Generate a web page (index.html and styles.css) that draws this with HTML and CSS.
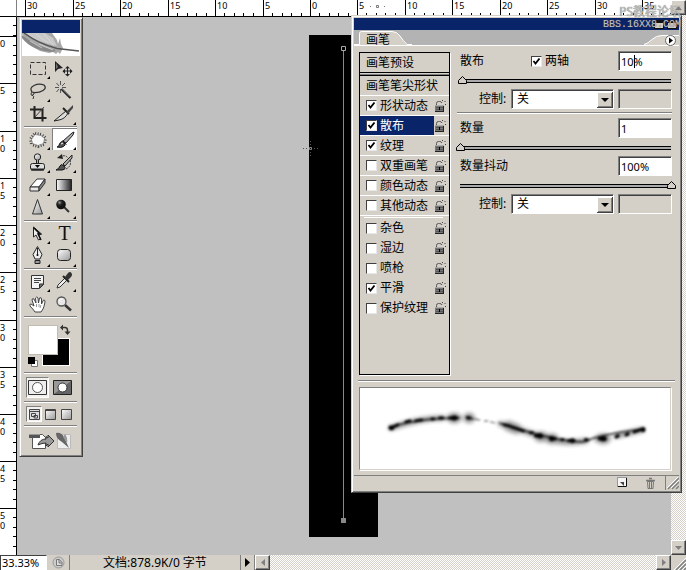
FILE: index.html
```html
<!DOCTYPE html>
<html lang="zh-CN">
<head>
    <meta charset="UTF-8">
    <meta name="viewport" content="width=device-width, initial-scale=1.0">
    <title>画笔</title>
    <link rel="stylesheet" href="styles.css">
</head>
<body>
    <svg width="0" height="0" class="defs">
        <defs>
            <linearGradient id="metal" x1="0" y1="0" x2="1" y2="1">
                <stop offset="0" stop-color="#fff"/>
                <stop offset="1" stop-color="#999"/>
            </linearGradient>
            <linearGradient id="fade">
                <stop offset="0" stop-color="#fff"/>
                <stop offset="1" stop-color="#222"/>
            </linearGradient>
            <radialGradient id="ball" cx="0.35" cy="0.3">
                <stop offset="0" stop-color="#999"/>
                <stop offset="0.5" stop-color="#222"/>
                <stop offset="1" stop-color="#111"/>
            </radialGradient>
            <symbol id="lock" viewBox="0 0 13 14">
                <path d="M2.500 7V4.500q0-2 2-2h1q2 0 2.500 1.500" fill="none" stroke="#555"/>
                <path d="M1 6h9v7H1z" fill="#777"/>
                <path d="M1 6h9v1H1z" fill="#aaa"/>
                <path d="M9 7h1v6H1v-1h8z" fill="#222"/>
                <path d="M2 8.500h7M2 10.500h7" stroke="#555"/>
                <path d="M5 8h1v3H5z"/>
                <path d="M8.500 1v1M10.500 2.500h1M11 5.500h1" stroke="#444"/>
            </symbol>
        </defs>
    </svg>

    <div class="app">
        <div class="ruler-corner"></div>
        <ol class="ruler-top">
            <li>30</li><li>25</li><li>20</li><li>15</li><li>10</li><li>5</li><li>0</li>
            <li>5</li><li>10</li><li>15</li><li>20</li><li>25</li><li>30</li><li>35</li>
        </ol>
        <ol class="ruler-left">
            <li></li><li>0</li><li>5</li><li>10</li><li>15</li><li>20</li><li>25</li>
            <li>30</li><li>35</li><li>40</li><li>45</li><li>50</li>
        </ol>

        <!-- Document -->
        <main class="canvas">
            <div class="document">
                <svg class="work-path" width="7" height="478" viewBox="0 0 7 478">
                    <path d="M3.500 5v468" stroke="#888"/>
                    <path d="M1.500 1.500h4v4h-4z" fill="#000" stroke="#aaa"/>
                    <path d="M1 473h5v5H1z" fill="#888"/>
                </svg>
                <svg class="cursor" width="15" height="15" viewBox="0 0 15 15">
                    <path d="M6.500 6.500h2v2h-2z" fill="none" stroke="#888"/>
                    <path d="M0 7.500h1M3 7.500h1M11 7.500h1M14 7.500h1M7.500 0v1M7.500 3v1M7.500 11v1M7.500 14v1" stroke="#555"/>
                </svg>
            </div>
        </main>

        <div class="scroll-v">
            <button class="scroll-btn" aria-label="向上"><svg width="7" height="4"><path d="M0 4 3.500 0 7 4z" fill="#808080"/></svg></button>
            <button class="scroll-btn" aria-label="向下"><svg width="7" height="4"><path d="M0 0 3.500 4 7 0z" fill="#808080"/></svg></button>
        </div>

        <!-- Status bar -->
        <footer class="status">
            <input class="zoom-level" type="text" value="33.33%" aria-label="缩放">
            <button class="status-icon" aria-label="版本">
                <svg width="13" height="13" viewBox="0 0 13 13"><circle cx="6.500" cy="6.500" r="5.500" fill="#ccc" stroke="#999"/><path d="M4.500 3.500h3l2.500 3v3H4.500zM7 4v3h3" fill="#ddd" stroke="#777"/></svg>
            </button>
            <span class="status-text">文档:878.9K/0 字节</span>
            <button class="status-more" aria-label="更多"><svg width="5" height="9"><path d="M0 0 5 4.500 0 9z"/></svg></button>
            <div class="scroll-h">
                <button class="scroll-btn" aria-label="向左"><svg width="4" height="7"><path d="M4 0 0 3.500 4 7z" fill="#808080"/></svg></button>
                <button class="scroll-btn" aria-label="向右"><svg width="4" height="7"><path d="M0 0 4 3.500 0 7z" fill="#808080"/></svg></button>
            </div>
            <svg class="size-grip" width="15" height="15"><path d="M5 15 15 5M9 15l6-6M13 15l2-2" stroke="#808080" stroke-width="1.500"/><path d="M3 15 15 3M7 15l8-8M11 15l4-4" stroke="#fff"/></svg>
        </footer>

        <svg class="ruler-cursor" width="15" height="5" viewBox="0 0 15 5">
            <path d="M6.500 1.500h2v2h-2z" fill="none" stroke="#777"/>
            <path d="M0 2.500h1M14 2.500h1" stroke="#777"/>
        </svg>

        <!-- Toolbox -->
        <aside class="toolbox">
            <div class="title-bar"></div>
            <svg class="feather" width="58" height="23" viewBox="0 0 58 23">
                <path d="M0 0h30l5 7 1 4 2-6 1 6 2 4-1 2-2 4-2-2-2 2-3-2-4 1-9-2Q8 13 0 1z" fill="#a8a8a8"/>
                <path d="M3 0h20l8 5 4 8Q15 9 3 0z" fill="#c8c8c8"/>
                <path d="M0 2Q14 14 34 17l-3 2Q10 18 0 5z" fill="#888"/>
                <path d="M6 1l12 8M14 1l12 9M22 1l10 12M8 8l12 7M17 11l14 6" stroke="#ddd" stroke-width="0.700"/>
                <path d="M2 0Q17 11 35 15.500L57 18" fill="none" stroke="#555" stroke-width="1.500"/>
            </svg>
            <div class="tools">
                <button class="tool more" aria-label="矩形选框"><svg viewBox="0 0 25 23"><path d="M4.500 5.500h15v12h-15z" fill="none" stroke="#333" stroke-dasharray="4 2"/></svg></button>
                <button class="tool" aria-label="移动"><svg viewBox="0 0 25 23"><path d="M3 4v11l3-3 5-1z" fill="#222"/><path d="M4 6v6l2-2z" fill="#777"/><path d="M15.500 10v8M11.500 14h8" stroke="#222"/><path d="m15.500 9 2.500 2.500h-5zM15.500 19.500l-2.500-2.500h5zM10.500 14.200l2.500-2.500v5zM20.500 14.200 18 11.700v5z" fill="#222"/></svg></button>
                <button class="tool more" aria-label="套索"><svg viewBox="0 0 25 23"><path d="M6 12Q3 8 8 5.500T18 5q3 3-1 5.500T7 12.500" fill="none" stroke="#333" stroke-width="1.300"/><path d="M7 12q-2 0-2 2t2 1 0-3M6 15q3 1 1 4" fill="none" stroke="#333"/></svg></button>
                <button class="tool" aria-label="魔棒"><svg viewBox="0 0 25 23"><path d="M8.500 1v4M8.500 9v4M3 7.500h4M10 7.500h4M4.500 3l2.500 3M13 3l-3 3M4.500 12 7 9" stroke="#555"/><path d="m9.500 9 9 9" stroke="#222" stroke-width="2.200"/><path d="m10 8.500 8 8" stroke="#999"/></svg></button>
                <button class="tool" aria-label="裁切"><svg viewBox="0 0 25 23"><path d="M8.500 3v12h12M4 6.500h12.500v12" fill="none" stroke="#222" stroke-width="2"/><path d="m9 14 9-10" stroke="#444"/></svg></button>
                <button class="tool more" aria-label="切片"><svg viewBox="0 0 25 23"><path d="m2 18 12-10 2 2q-3 6-9 7z" fill="#ddd" stroke="#222"/><path d="m11 5 6 6" stroke="#222" stroke-width="2"/><path d="m14 9 7-7v3l-5 6z" fill="#444"/></svg></button>
            </div>
            <div class="rule"></div>
            <div class="tools">
                <button class="tool more" aria-label="修补"><svg viewBox="0 0 25 23"><path d="m9 6 6 1 4 3-1 6-6 2-6-2-1-5z" fill="none" stroke="#444" stroke-width="4" stroke-dasharray="1 1.500"/><path d="m9 6.500 6 1 3.500 3-1 5-5.500 2-5.500-2-1-4z" fill="#f8f8f8" stroke="#777" stroke-width="0.700"/></svg></button>
                <button class="tool more active" aria-label="画笔"><svg viewBox="0 0 25 23"><path d="m11 13 9-8 2-1-1 3-7 8z" fill="#aaa" stroke="#222"/><path d="m10.500 12.500 4 4" stroke="#222"/><path d="M5 19q2 0 2.500-3 2-4 4.500-1.500t-.5 4Q9 20 5 19z" fill="#555" stroke="#111"/><path d="M9 16l2-1" stroke="#fff"/></svg></button>
                <button class="tool more" aria-label="图章"><svg viewBox="0 0 25 23"><circle cx="11.500" cy="6" r="3.200" fill="url(#metal)" stroke="#222"/><path d="M10.500 9v4h2V9" fill="#aaa" stroke="#222"/><rect x="4.500" y="12.500" width="14" height="6.500" rx="2" fill="#ddd" stroke="#222"/><path d="M5 18.500h13" stroke="#222" stroke-width="2"/><path d="M9 14h5l-2.500 3z"/></svg></button>
                <button class="tool more" aria-label="历史记录画笔"><svg viewBox="0 0 25 23"><path d="m11 13 9-9v3l-7 8z" fill="#aaa" stroke="#222"/><path d="M4 19q3-1 4-4t4 0-2 4z" fill="#555" stroke="#111"/><path d="M8 6q5-3 8 1M18 9q2 6-4 9" fill="none" stroke="#333" stroke-dasharray="2 1"/><path d="m5 7 5-4 1 5z" fill="#222"/></svg></button>
                <button class="tool more" aria-label="橡皮擦"><svg viewBox="0 0 25 23"><path d="m4 13 7-8h8l-6 8z" fill="#fff" stroke="#333"/><path d="M4 13h9v4H4z" fill="#e8e8e8" stroke="#333"/><path d="m13 13 6-8v4l-6 8z" fill="#888" stroke="#333"/></svg></button>
                <button class="tool more" aria-label="渐变"><svg viewBox="0 0 25 23"><path d="M4.500 5.500h15v11h-15z" fill="url(#fade)" stroke="#222"/></svg></button>
                <button class="tool more" aria-label="锐化"><svg viewBox="0 0 25 23"><path d="m11.500 2.500 5 14.500h-10z" fill="url(#metal)" stroke="#333"/></svg></button>
                <button class="tool more" aria-label="加深"><svg viewBox="0 0 25 23"><path d="m12 10 5 5" stroke="#333" stroke-width="2"/><circle cx="9" cy="7.500" r="4.800" fill="url(#ball)"/></svg></button>
            </div>
            <div class="rule"></div>
            <div class="tools">
                <button class="tool more" aria-label="路径选择"><svg viewBox="0 0 25 23"><path d="M7.500 5v10l2.500-2 2.500 5 2-1-2-5h3z" fill="#eee" stroke="#222"/><path d="m8 6 6 6h-2l3 6" fill="none" stroke="#111" stroke-width="1.500"/></svg></button>
                <button class="tool more type" aria-label="文字">T</button>
                <button class="tool more" aria-label="钢笔"><svg viewBox="0 0 25 23"><path d="m11.500 1.500 4.500 8-2 4.500H9L7 9.500z" fill="#eee" stroke="#222"/><path d="M11.500 3v6" stroke="#222"/><circle cx="11.500" cy="10" r="1"/><path d="M9 15.500h5v3H9z" fill="#999" stroke="#222"/></svg></button>
                <button class="tool more" aria-label="形状"><svg viewBox="0 0 25 23"><rect x="5.500" y="4.500" width="13" height="11" rx="3" fill="url(#metal)" stroke="#222"/></svg></button>
            </div>
            <div class="rule"></div>
            <div class="tools">
                <button class="tool more" aria-label="注释"><svg viewBox="0 0 25 23"><path d="M5.500 5.500h12v9l-4 4h-8z" fill="#f4f4f4" stroke="#333"/><path d="M13.500 18v-4h4z" fill="#777" stroke="#333"/><path d="M8 8.500h7M8 10.500h7M8 12.500h5" stroke="#444"/></svg></button>
                <button class="tool more" aria-label="吸管"><svg viewBox="0 0 25 23"><path d="m5 18 1-3 8-8 2 2-8 8z" fill="#eee" stroke="#333"/><path d="m11 6 6 6" stroke="#222" stroke-width="2"/><path d="m13 7 3-4q2-2 3.500 0T19 7l-3 3z" fill="#333"/></svg></button>
                <button class="tool" aria-label="抓手"><svg viewBox="0 0 25 23"><path d="M9 19q-2-3-5-6-1-2 1-2l3 2-2-6q0-2 2-1l2 4-.5-5q1-2 2.500 0l.5 5 1-5q2-1 2 1v5l2-4q2 0 1.500 2-1 5-2 7l-2 3z" fill="#fff" stroke="#444"/><path d="M10.500 11v3M13 11v3M15 12l-1 3" stroke="#999"/></svg></button>
                <button class="tool" aria-label="缩放"><svg viewBox="0 0 25 23"><path d="m13 12 6 5.500" stroke="#333" stroke-width="2.500"/><circle cx="9.500" cy="8.500" r="4.500" fill="#e8e8e8" stroke="#555" stroke-width="1.300"/><path d="M7 8q1-2 3-2" fill="none" stroke="#fff"/></svg></button>
            </div>
            <div class="rule"></div>
            <div class="swatches">
                <button class="swatch background" aria-label="背景色"></button>
                <button class="swatch foreground" aria-label="前景色"></button>
                <button class="swap" aria-label="切换颜色"><svg width="11" height="11" viewBox="0 0 11 11"><path d="M3 3.500h2q2.500 0 2.500 3V8" fill="none" stroke="#333" stroke-width="1.500"/><path d="M0 3.500 3 .5v6zM4.500 7.500h6l-3 3.500z" fill="#333"/></svg></button>
                <button class="reset" aria-label="默认颜色"><svg width="10" height="10" viewBox="0 0 10 10"><path d="M3.500 3.500h6v6h-6z" fill="#fff" stroke="#777"/><path d="M0 0h7v7H0z"/></svg></button>
            </div>
            <div class="rule"></div>
            <div class="modes">
                <button class="mode pressed" aria-label="标准模式"><svg width="19" height="15" viewBox="0 0 19 15"><path d="M.5.5h18v14H.5z" fill="#eee" stroke="#333"/><circle cx="9.500" cy="7.500" r="5" fill="#fff" stroke="#555"/></svg></button>
                <button class="mode" aria-label="快速蒙版"><svg width="19" height="15" viewBox="0 0 19 15"><path d="M.5.5h18v14H.5z" fill="#666" stroke="#222"/><path d="M1 1h17L1 14z" fill="#999"/><circle cx="9.500" cy="7.500" r="4.500" fill="#fff" stroke="#333"/></svg></button>
            </div>
            <div class="rule"></div>
            <div class="modes screens">
                <button class="mode pressed" aria-label="标准屏幕"><svg width="11" height="11" viewBox="0 0 11 11"><path d="M.5.5h10v10H.5z" fill="#ddd" stroke="#444"/><path d="M1 2.500h9M2.500 4.500h4v3h-4zM5 6.500h3.500v2.500H5z" fill="none" stroke="#444"/></svg></button>
                <button class="mode" aria-label="带菜单栏的全屏"><svg width="11" height="11" viewBox="0 0 11 11"><path d="M.5.5h10v10H.5z" fill="url(#metal)" stroke="#444"/><path d="M1 1.500h9" stroke="#444"/></svg></button>
                <button class="mode" aria-label="全屏"><svg width="11" height="11" viewBox="0 0 11 11"><path d="M.5.5h10v10H.5z" fill="url(#metal)" stroke="#444"/></svg></button>
            </div>
            <div class="rule"></div>
            <button class="jump" aria-label="转到 ImageReady">
                <svg width="43" height="18" viewBox="0 0 43 18">
                    <path d="M3.500 2.500h10l3 3v11h-13z" fill="#fff" stroke="#555"/>
                    <path d="M0 2h11v4H0z" fill="#555"/><path d="M0 2h11v1H0z" fill="#999"/>
                    <path d="M9 13q2-6 8-6V4.500l2 1.500V3l6 6-6 6v-3l-2 2v-3q-4 0-8 2z" fill="#999" stroke="#333"/>
                    <path d="M28.500 2.500h13v14h-13z" fill="#eee" stroke="#bbb"/>
                    <path d="M27 1q5-1 8 4l5 11-7-6q-6-3-6-9z" fill="#666"/><path d="M36 2q3 4 2 9l-4-6z" fill="#999"/>
                </svg>
            </button>
        </aside>

        <!-- Brush palette -->
        <section class="palette">
            <div class="title-bar"><span class="win-btn"></span><span class="win-btn close"></span></div>
            <div class="tab-strip">
                <div class="tab">
                    <svg width="58" height="15" viewBox="0 0 58 15"><path d="M0 15.500V14h5.500V3.500q0-2 2-2H38q5 0 8 4.500t6 8H58V16H0z" fill="#d4d0c8"/><path d="M0 14.500h5.500V3.500q0-2 2-2H38q5 0 8 4.500t7 8.500h5" fill="none" stroke="#fff"/></svg>
                    <span>画笔</span>
                </div>
                <div class="tab-menu">
                    <svg width="35" height="15" viewBox="0 0 35 15"><path d="M0 14.500q4-1 8-5t10-4h17V15H0z" fill="#d4d0c8"/><path d="M0 14.500q4-1 8-5t10-4h17" fill="none" stroke="#fff"/></svg>
                    <button aria-label="面板菜单"><svg width="11" height="11" viewBox="0 0 11 11"><circle cx="5.500" cy="5.500" r="5" fill="#fff" stroke="#666"/><path d="m4 2.500 4 3-4 3z"/></svg></button>
                </div>
            </div>

            <div class="palette-body">
                <div class="options">
                    <div class="presets">画笔预设</div>
                    <div class="tip-shape">画笔笔尖形状</div>
                    <div class="option"><label><input type="checkbox" checked>形状动态</label><svg><use href="#lock"/></svg></div>
                    <div class="option selected"><label><input type="checkbox" checked>散布</label><svg><use href="#lock"/></svg></div>
                    <div class="option"><label><input type="checkbox" checked>纹理</label><svg><use href="#lock"/></svg></div>
                    <div class="option"><label><input type="checkbox">双重画笔</label><svg><use href="#lock"/></svg></div>
                    <div class="option"><label><input type="checkbox">颜色动态</label><svg><use href="#lock"/></svg></div>
                    <div class="option"><label><input type="checkbox">其他动态</label><svg><use href="#lock"/></svg></div>
                    <div class="options-rule"></div>
                    <div class="option plain"><label><input type="checkbox">杂色</label><svg><use href="#lock"/></svg></div>
                    <div class="option plain"><label><input type="checkbox">湿边</label><svg><use href="#lock"/></svg></div>
                    <div class="option plain"><label><input type="checkbox">喷枪</label><svg><use href="#lock"/></svg></div>
                    <div class="option plain"><label><input type="checkbox" checked>平滑</label><svg><use href="#lock"/></svg></div>
                    <div class="option plain"><label><input type="checkbox">保护纹理</label><svg><use href="#lock"/></svg></div>
                </div>

                <div class="settings">
                    <div class="param">
                        <label for="scatter">散布</label>
                        <label class="both-axes"><input type="checkbox" checked>两轴</label>
                        <span class="field"><input type="text" id="scatter" value="10%"><i class="caret"></i></span>
                    </div>
                    <input class="slider" type="range" min="0" max="100" value="1" aria-label="散布">
                    <div class="control">
                        <label for="scatter-control">控制:</label>
                        <select id="scatter-control"><option>关</option></select>
                        <input class="off" type="text" disabled aria-label="渐隐步数">
                    </div>
                    <div class="settings-rule"></div>
                    <div class="param">
                        <label for="count">数量</label>
                        <span class="field"><input type="text" id="count" value="1"></span>
                    </div>
                    <input class="slider" type="range" min="0" max="100" value="0" aria-label="数量">
                    <div class="param">
                        <label for="jitter">数量抖动</label>
                        <span class="field"><input type="text" id="jitter" value="100%"></span>
                    </div>
                    <input class="slider" type="range" min="0" max="100" value="100" aria-label="数量抖动">
                    <div class="control">
                        <label for="jitter-control">控制:</label>
                        <select id="jitter-control"><option>关</option></select>
                        <input class="off" type="text" disabled aria-label="渐隐步数">
                    </div>
                </div>
            </div>

            <div class="preview">
                <svg viewBox="0 0 311 81">
                    <defs>
                        <filter id="soft" x="-10%" y="-50%" width="120%" height="200%"><feGaussianBlur stdDeviation="1.200"/></filter>
                        <filter id="softer" x="-10%" y="-50%" width="120%" height="200%"><feGaussianBlur stdDeviation="2"/></filter>
                    </defs>
                    <g filter="url(#softer)" fill="none" stroke="#000" stroke-linecap="round" opacity="0.450">
                        <path d="M31 40Q61 30 83 30M89 30h11M107 30h5M141 36Q165 43 185 50T227 53M237 51l12-1M257 48l26-6" stroke-width="5"/>
                        <path d="M93 30h3M109 30h1M149 38l8 3M180 49h3M191 51h3M242 51h4" stroke-width="10"/>
                    </g>
                    <g filter="url(#soft)" fill="none" stroke="#000" stroke-linecap="round">
                        <path d="M31 40l7-3M46 34l4-1M56 33l6-1M72 31l2 0M80 30l3 0M90 30h7M108 30h2M145 37l5 1M152 39l12 4M171 45l2 0M176 48l6 1M191 50l5 1M202 52h2M209 53h6M226 52h2M240 51h6M257 49l2-1M267 47l2-1M275 44l9-3" stroke-width="3"/>
                        <path d="M38 37Q64 30 99 30M107 29l6 2M142 36q38 12 60 16t28 0 54-11" stroke-width="2" opacity="0.650"/>
                        <path d="M115 31l5 1M125 33l3 0M131 34l4 1M139 35l4 1" stroke-width="1.500" opacity="0.500"/>
                        <path d="M31 40l1 0M94 30h1M180 48h1M192 51h1M213 53h0M243 51h2M284 42h0" stroke-width="5"/>
                    </g>
                </svg>
            </div>

            <div class="palette-footer">
                <button aria-label="新建画笔"><svg width="11" height="11" viewBox="0 0 11 11"><path d="M1 1h9v9H1z" fill="#f4f4f4"/><path d="M.5 10V.5H10" fill="none" stroke="#999"/><path d="M9.500 1v8.500H1" fill="none" stroke="#111"/><path d="M3 5h4v4z" fill="#444"/></svg></button>
                <button aria-label="删除画笔"><svg width="11" height="12" viewBox="0 0 11 12"><path d="M1 3.500h9M4 1.500h3" stroke="#777" stroke-width="1.500"/><path d="M2.500 4.500h6l-.5 7H3zM4.500 5v6M6.500 5v6" fill="none" stroke="#777"/></svg></button>
                <svg class="grip" width="14" height="15"><path d="M2 14 13 3M6 14l7-7M10 14l3-3" stroke="#808080" stroke-width="1.500"/><path d="M1 13 12 2M5 13l8-8" stroke="#fff"/></svg>
            </div>
        </section>

        <div class="watermark">
            <span>PS教程论坛</span>
            <span class="site">BBS.16XX8.COM</span>
        </div>
    </div>
</body>
</html>
```
FILE: styles.css
```css
* {
    box-sizing: border-box;
}

body {
    margin: 0;
    height: 100vh;
    overflow: hidden;
    background: #d4d0c8;
    color: #000;
    font-family: "Noto Sans", "Noto Sans CJK SC", sans-serif;
    font-size: 12px;
    line-height: 16px;
}

button,
input,
select {
    margin: 0;
    padding: 0;
    border: 0;
    border-radius: 0;
    background: none;
    color: inherit;
    font: inherit;
    outline: none;
}

svg {
    display: block;
}

.defs {
    position: absolute;
}

.app {
    position: relative;
    display: grid;
    grid-template-columns: 17px 1fr 15px;
    grid-template-rows: 17px 1fr 15px;
    height: 100%;
}

/* Rulers */
.ruler-corner {
    background: #fff;
    border-right: 1px solid #808080;
    border-bottom: 1px solid #000;
    background-image: radial-gradient(#000 40%, transparent 50%), radial-gradient(#000 40%, transparent 50%);
    background-size: 2px 2px;
    background-repeat: repeat-x, repeat-y;
    background-position: 0 12px, 12px 0;
}

.ruler-top,
.ruler-left {
    display: grid;
    margin: 0;
    list-style: none;
    background: #fff;
    overflow: hidden;
    font-size: 9px;
    line-height: 10px;
}

.ruler-top {
    grid-template-columns: 48px 47px 48px 47px 48px 47px 47px 48px 47px 48px 47px 48px 47px 48px;
    padding: 0 0 0 8px;
    border-bottom: 1px solid #000;
}

.ruler-top li {
    padding: 1px 0 0 1px;
    border-left: 1px solid #000;
    background-image: linear-gradient(#000, #000), linear-gradient(#000, #000), linear-gradient(#000, #000), linear-gradient(#000, #000);
    background-size: 1px 3px;
    background-position: 8px 100%, 18px 100%, 27px 100%, 37px 100%;
    background-repeat: no-repeat;
}

.ruler-left {
    grid-template-rows: 19px 47px 48px 47px 47px 47px 48px 47px 47px 47px 47px 47px;
    padding: 0;
    border-right: 1px solid #000;
}

.ruler-left li {
    padding: 2px 10px 0 0;
    border-top: 1px solid #000;
    word-break: break-all;
    background-image: linear-gradient(#000, #000), linear-gradient(#000, #000), linear-gradient(#000, #000), linear-gradient(#000, #000);
    background-size: 3px 1px;
    background-position: 100% 8px, 100% 18px, 100% 27px, 100% 37px;
    background-repeat: no-repeat;
}

.ruler-left li:first-child {
    border-top: 0;
}

.ruler-cursor {
    position: absolute;
    left: 370px;
    top: 4px;
}

/* Document area */
.canvas {
    display: flex;
    justify-content: center;
    align-items: center;
    padding-right: 2px;
    background: #c0c0c0;
    min-height: 0;
}

.document {
    position: relative;
    width: 69px;
    height: 502px;
    background: #000;
}

.work-path {
    position: absolute;
    left: 31px;
    top: 10px;
}

.cursor {
    position: absolute;
    left: -6px;
    top: 106px;
}

/* Scrollbars */
.scroll-v,
.scroll-h {
    display: flex;
    justify-content: space-between;
    background: repeating-conic-gradient(#d4d0c8 0 25%, #fff 0 50%) 0 0 / 2px 2px;
}

.scroll-v {
    grid-column: 3;
    grid-row: 1 / 3;
    flex-direction: column;
}

.scroll-h {
    flex: 1;
}

.scroll-btn {
    display: flex;
    justify-content: center;
    align-items: center;
    width: 15px;
    height: 15px;
    background: #d4d0c8;
    border: 1px solid;
    border-color: #fff #404040 #404040 #fff;
    box-shadow: inset -1px -1px #808080;
}

/* Status bar */
.status {
    grid-column: 1 / 4;
    display: flex;
    align-items: stretch;
    background: #d4d0c8;
}

.zoom-level {
    width: 47px;
    padding-left: 1px;
    background: #fff;
    border: solid #404040;
    border-width: 1px 0 0 1px;
    border-right: 1px solid #fff;
    font-size: 11px;
}

.status-icon {
    display: flex;
    justify-content: center;
    align-items: center;
    width: 23px;
    border-right: 1px solid #808080;
}

.status-text {
    width: 170px;
    text-align: center;
}

.status-more {
    display: flex;
    justify-content: center;
    align-items: center;
    width: 15px;
    border: solid #808080;
    border-width: 0 1px;
}

.size-grip {
    background: #d4d0c8;
}

/* Toolbox */
.toolbox {
    position: absolute;
    left: 19px;
    top: 17px;
    width: 64px;
    padding: 2px 1px 1px 2px;
    background: #d4d0c8;
    border: 1px solid;
    border-color: #d4d0c8 #404040 #404040 #d4d0c8;
    box-shadow: inset 1px 1px #fff, inset -1px -1px #808080;
}

.title-bar {
    height: 13px;
    background: #0a246a;
}

.toolbox .title-bar {
    margin-right: 1px;
}

.feather {
    background: #fff;
}

.tools {
    display: grid;
    grid-template-columns: 26px 26px;
    grid-auto-rows: 23px;
    padding-left: 4px;
}

.feather + .tools {
    margin-top: 1px;
}

.tool {
    position: relative;
    width: 25px;
    height: 22px;
}

.tool svg {
    width: 25px;
    height: 23px;
}

.tool.more::after {
    content: "";
    position: absolute;
    right: 1px;
    bottom: 0;
    border-left: 3px solid transparent;
    border-bottom: 3px solid #000;
}

.tool.active {
    background: #fff;
    box-shadow: inset 1px 1px #808080;
}

.tool.type {
    font: 20px/22px "Liberation Serif", serif;
    color: #111;
}

.rule {
    height: 2px;
    margin: 0 4px 0 2px;
    border-top: 1px solid #808080;
    border-bottom: 1px solid #fff;
}

.swatches {
    position: relative;
    height: 54px;
}

.swatch {
    position: absolute;
    width: 28px;
    height: 28px;
    border: 1px solid #fff;
}

.foreground {
    left: 7px;
    top: 8px;
    background: #fff;
    box-shadow: 0 0 0 1px #c0bcb4;
}

.background {
    left: 20px;
    top: 20px;
    background: #000;
}

.swap {
    position: absolute;
    left: 38px;
    top: 6px;
}

.reset {
    position: absolute;
    left: 6px;
    top: 39px;
}

.modes {
    display: flex;
    align-items: center;
    gap: 2px;
    height: 27px;
    padding-left: 4px;
}

.mode {
    display: flex;
    justify-content: center;
    align-items: center;
    width: 23px;
    height: 21px;
}

.mode.pressed {
    background: #f4f2ee;
    border: 1px solid;
    border-color: #808080 #fff #fff #808080;
}

.screens {
    gap: 0;
    height: 22px;
}

.screens .mode {
    width: 16px;
    height: 16px;
}

.jump {
    display: flex;
    align-items: center;
    height: 28px;
    padding-left: 7px;
}

/* Brush palette */
.palette {
    position: absolute;
    right: 4px;
    top: 15px;
    width: 331px;
    padding: 2px;
    background: #d4d0c8;
    border: 1px solid;
    border-color: #d4d0c8 #404040 #404040 #d4d0c8;
    box-shadow: inset 1px 1px #fff, inset -1px -1px #808080;
}

.palette .title-bar {
    display: flex;
    justify-content: flex-end;
    align-items: center;
    gap: 3px;
    height: 12px;
    padding-right: 2px;
}

.win-btn {
    width: 10px;
    height: 9px;
    background: #d4d0c8;
    border: 1px solid #111;
    border-top-width: 3px;
}

.tab-strip {
    display: flex;
    justify-content: space-between;
    background: #b3b3b3;
    border-bottom: 1px solid #fff;
    height: 16px;
}

.tab,
.tab-menu {
    position: relative;
}

.tab span {
    position: absolute;
    left: 12px;
    top: 2px;
}

.tab-menu button {
    position: absolute;
    right: 3px;
    top: 5px;
}

.palette-body {
    display: flex;
    gap: 7px;
    margin: 0 4px;
    padding: 6px 3px 5px 1px;
    border-bottom: 1px solid #808080;
    box-shadow: 0 1px #fff;
}

/* Option list */
.options {
    width: 91px;
    height: 323px;
    border: 1px solid #000;
    box-shadow: 1px 1px #fff;
}

.presets {
    height: 20px;
    padding: 2px 0 0 6px;
    border-bottom: 1px solid #000;
}

.tip-shape {
    height: 21px;
    margin-top: 2px;
    padding: 2px 0 0 6px;
    border-top: 1px solid #000;
    border-bottom: 1px solid #fff;
    box-shadow: 0 -1px #808080;
}

.option {
    display: flex;
    align-items: center;
    justify-content: space-between;
    height: 20px;
    border-bottom: 1px solid #fff;
}

.option label {
    display: flex;
    align-items: center;
    gap: 3px;
    flex: 1;
    height: 19px;
    padding-left: 6px;
    white-space: nowrap;
}

.option svg {
    width: 13px;
    height: 14px;
    margin-right: 2px;
}

.option.selected label {
    background: #0a246a;
    color: #fff;
}

.option.plain {
    border-bottom: 0;
}

.options-rule {
    height: 2px;
    margin: 0 6px 0 4px;
    border-bottom: 1px solid #fff;
}

input[type="checkbox"] {
    appearance: none;
    width: 11px;
    height: 11px;
    background: #fff;
    border: 1px solid;
    border-color: #404040 #e8e8e8 #e8e8e8 #404040;
}

input[type="checkbox"]:checked {
    background: #fff url("data:image/svg+xml,%3Csvg xmlns='http://www.w3.org/2000/svg' width='9' height='9'%3E%3Cpath d='M1.500 4l2 2.500 4-5' fill='none' stroke='%23000' stroke-width='1.800'/%3E%3C/svg%3E") no-repeat center;
}

/* Settings */
.settings {
    flex: 1;
    display: flex;
    flex-direction: column;
    margin-top: -1px;
}

.param,
.control {
    display: flex;
    align-items: center;
    height: 20px;
    padding-left: 3px;
}

.both-axes {
    display: flex;
    align-items: center;
    gap: 3px;
    margin-left: 47px;
}

.field {
    position: relative;
    margin-left: auto;
}

.field input,
.off {
    display: block;
    width: 54px;
    height: 20px;
    padding-left: 2px;
    background: #fff;
    border: 1px solid;
    border-color: #808080 #fff #fff #808080;
    box-shadow: inset 1px 1px #404040;
    font-size: 11px;
}

.control .off {
    background: #d4d0c8;
}

.caret {
    position: absolute;
    left: 16px;
    top: 4px;
    width: 1px;
    height: 13px;
    background: #000;
}

.control {
    padding-left: 22px;
    justify-content: space-between;
}

.control select {
    width: 103px;
    height: 20px;
    margin-left: auto;
    margin-right: 4px;
    padding-left: 5px;
    appearance: none;
    border: 1px solid;
    border-color: #808080 #fff #fff #808080;
    box-shadow: inset 1px 1px #404040;
    background: #fff url("data:image/svg+xml,%3Csvg xmlns='http://www.w3.org/2000/svg' width='16' height='16'%3E%3Cpath d='M0 0h16v16H0z' fill='%23404040'/%3E%3Cpath d='M0 0h15v15H0z' fill='%23fff'/%3E%3Cpath d='M1 1h14v14H1z' fill='%23808080'/%3E%3Cpath d='M1 1h13v13H1z' fill='%23d4d0c8'/%3E%3Cpath d='M4 6h8l-4 4z'/%3E%3C/svg%3E") no-repeat right 0 bottom 0;
}

.slider {
    appearance: none;
    height: 18px;
    margin: 0 -4px 0 -1px;
    background: linear-gradient(#000 1px, #aaa 1px, #aaa 3px, #000 3px) no-repeat 4px 8px / calc(100% - 9px) 4px;
}

.slider::-webkit-slider-thumb {
    appearance: none;
    width: 9px;
    height: 8px;
    margin-top: -1px;
    background: url("data:image/svg+xml,%3Csvg xmlns='http://www.w3.org/2000/svg' width='9' height='8'%3E%3Cpath d='M.5 7.500V4.500l4-4 4 4v3z' fill='%23d4d0c8' stroke='%23000'/%3E%3C/svg%3E");
}

.settings-rule {
    height: 9px;
    border-top: 3px solid #d4d0c8;
    background: linear-gradient(#808080 1px, #fff 1px, #fff 2px, transparent 2px);
}

/* Stroke preview */
.preview {
    margin: 6px 8px 0 5px;
    background: #fff;
    border: 1px solid;
    border-color: #808080 #d4d0c8 #d4d0c8 #808080;
    box-shadow: 1px 1px #fff;
}

.preview svg {
    width: 100%;
}

.palette-footer {
    display: flex;
    align-items: center;
    justify-content: flex-end;
    gap: 17px;
    height: 15px;
    margin-top: 5px;
    border-top: 1px solid #808080;
}

.palette-footer .grip {
    margin-left: -8px;
    border-left: 1px solid #808080;
}

.watermark {
    position: absolute;
    right: 5px;
    top: 5px;
    display: flex;
    flex-direction: column;
    align-items: flex-end;
    color: #c0c0c0;
    line-height: 14px;
    text-shadow: 0 0 1px #555;
}

.watermark .site {
    font: 10px/12px "Liberation Mono", monospace;
}
```
